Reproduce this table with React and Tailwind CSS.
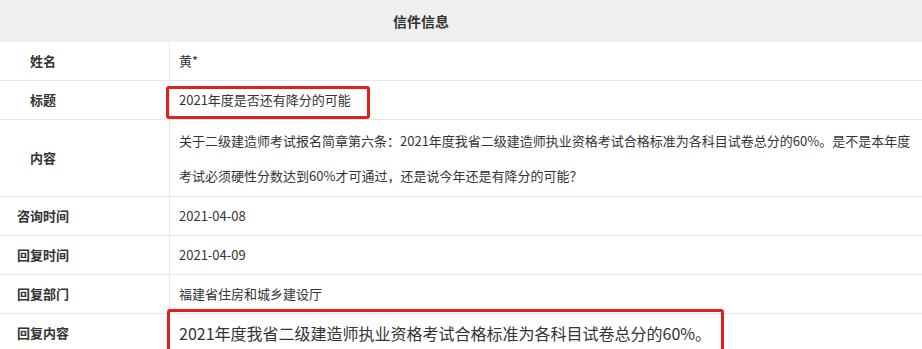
export default function App() {
  const rows = [
    { label: "姓名", value: "黄*" },
    { label: "标题", value: "2021年度是否还有降分的可能", box: "title" },
    {
      label: "内容",
      lines: [
        "关于二级建造师考试报名简章第六条：2021年度我省二级建造师执业资格考试合格标准为各科目试卷总分的60%。是不是本年度",
        "考试必须硬性分数达到60%才可通过，还是说今年还是有降分的可能？",
      ],
    },
    { label: "咨询时间", value: "2021-04-08" },
    { label: "回复时间", value: "2021-04-09" },
    { label: "回复部门", value: "福建省住房和城乡建设厅" },
    { label: "回复内容", value: "2021年度我省二级建造师执业资格考试合格标准为各科目试卷总分的60%。", box: "reply" },
  ];

  return (
    <div
      className="w-[922px] h-[349px] overflow-hidden bg-white text-[#333]"
      style={{ fontFamily: '"Microsoft YaHei", "Noto Sans CJK SC", "Noto Sans", sans-serif' }}
    >
      {/* header */}
      <div className="h-[42px] bg-[#efefef] flex items-center">
        <div className="w-[842px] text-center text-[14px] font-bold">信件信息</div>
      </div>

      {rows.map((row) => (
        <div
          key={row.label}
          className={
            "flex border-b border-[#e8e8e8] " +
            (row.lines ? "h-[77px]" : "h-[39px]")
          }
        >
          <div className="w-[170px] shrink-0 flex items-center border-r border-[#e8e8e8]">
            <div className="w-[86px] text-center text-[13px] font-bold">{row.label}</div>
          </div>
          <div className="relative flex-1 flex items-center pl-[9px]">
            {row.lines ? (
              <div className="text-[13px] leading-[35px]">
                {row.lines.map((l) => (
                  <div key={l} className="whitespace-nowrap">{l}</div>
                ))}
              </div>
            ) : (
              <div
                className={
                  "whitespace-nowrap " +
                  (row.box === "reply" ? "text-[16px]" : "text-[13px]")
                }
              >
                {row.value}
              </div>
            )}
            {row.box === "title" && (
              <div className="absolute left-[-4px] top-[5px] w-[204px] h-[33px] border-[3px] border-[#e1211f] rounded-[3px]" />
            )}
            {row.box === "reply" && (
              <div className="absolute left-[-3px] top-[-5px] w-[557px] h-[50px] border-[3px] border-[#e1211f] rounded-[3px]" />
            )}
          </div>
        </div>
      ))}
    </div>
  );
}
